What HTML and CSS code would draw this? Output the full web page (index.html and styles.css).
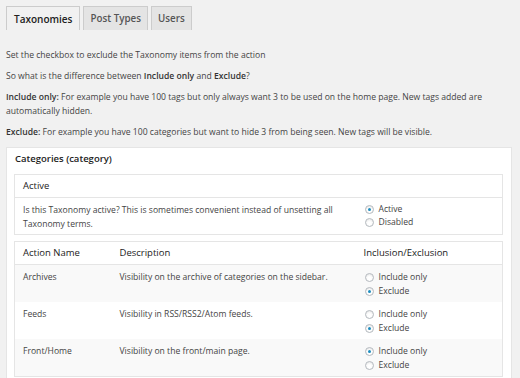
FILE: index.html
```html
<!DOCTYPE html>
<html>
<head>
<meta charset="utf-8">
<link rel="stylesheet" href="styles.css">
</head>
<body>
<nav class="tabs">
  <span class="tab active">Taxonomies</span>
  <span class="tab">Post Types</span>
  <span class="tab">Users</span>
</nav>
<p class="intro first">Set the checkbox to exclude the Taxonomy items from the action</p>
<p class="intro">So what is the difference between <b>Include only</b> and <b>Exclude</b>?</p>
<p class="intro"><b>Include only:</b> For example you have 100 tags but only always want 3 to be used on the home page. New tags added are automatically hidden.</p>
<p class="intro"><b>Exclude:</b> For example you have 100 categories but want to hide 3 from being seen. New tags will be visible.</p>

<section class="panel">
  <h2 class="panel-title">Categories (category)</h2>
  <table class="box">
    <colgroup><col class="c1"><col class="c2"><col></colgroup>
    <thead><tr><th colspan="3">Active</th></tr></thead>
    <tbody>
      <tr>
        <td colspan="2">Is this Taxonomy active? This is sometimes convenient instead of unsetting all Taxonomy terms.</td>
        <td>
          <label class="radio"><span class="dot on"></span>Active</label>
          <label class="radio"><span class="dot"></span>Disabled</label>
        </td>
      </tr>
    </tbody>
  </table>
  <table class="box actions">
    <colgroup><col class="c1"><col class="c2"><col></colgroup>
    <thead><tr><th>Action Name</th><th>Description</th><th>Inclusion/Exclusion</th></tr></thead>
    <tbody>
      <tr class="alt">
        <td>Archives</td>
        <td>Visibility on the archive of categories on the sidebar.</td>
        <td>
          <label class="radio"><span class="dot"></span>Include only</label>
          <label class="radio"><span class="dot on"></span>Exclude</label>
        </td>
      </tr>
      <tr>
        <td>Feeds</td>
        <td>Visibility in RSS/RSS2/Atom feeds.</td>
        <td>
          <label class="radio"><span class="dot"></span>Include only</label>
          <label class="radio"><span class="dot on"></span>Exclude</label>
        </td>
      </tr>
      <tr class="alt">
        <td>Front/Home</td>
        <td>Visibility on the front/main page.</td>
        <td>
          <label class="radio"><span class="dot on"></span>Include only</label>
          <label class="radio"><span class="dot"></span>Exclude</label>
        </td>
      </tr>
    </tbody>
  </table>
</section>
</body>
</html>
```
FILE: styles.css
```css
html, body {
  margin: 0;
  background: #f1f1f1;
}
body {
  padding: 6px 8px 0 6px;
  font-family: "Open Sans", "DejaVu Sans", sans-serif;
  font-size: 8.6px;
  line-height: 14px;
  color: #444;
  overflow: hidden;
}
b { font-weight: 600; color: #333; }

.tabs {
  display: flex;
  gap: 3px;
  height: 24px;
}
.tab {
  display: block;
  padding: 0 6px;
  height: 24px;
  line-height: 24px;
  border: 1px solid #ccc;
  border-bottom: none;
  background: #e4e4e4;
  color: #555;
  font-size: 9.8px;
  font-weight: 600;
  box-sizing: border-box;
}
.tab.active {
  background: #f1f1f1;
  color: #222;
  padding: 0 7px;
  font-size: 10px;
}

.intro {
  margin: 7px 0 0;
}
.intro.first { margin-top: 18px; }

.panel {
  margin-top: 8px;
  background: #fff;
  border: 1px solid #e5e5e5;
  padding: 0 8px 8px 7px;
}
.panel-title {
  margin: 0;
  padding: 4px 0 8px 1px;
  font-size: 9.5px;
  line-height: 14px;
  font-weight: 600;
  color: #222;
}

.box {
  width: 100%;
  border-collapse: collapse;
  border: 1px solid #e5e5e5;
  table-layout: fixed;
  margin-bottom: 6px;
}
.box .c1 { width: 97px; }
.box .c2 { width: 244px; }
.box th {
  text-align: left;
  font-weight: 400;
  color: #222;
  font-size: 9.5px;
  height: 22px;
  padding: 0 8px;
  border-bottom: 1px solid #e5e5e5;
  vertical-align: middle;
}
.box td {
  padding: 5px 8px 0;
  vertical-align: top;
  height: 31px;
}
.box tr.alt td { background: #f9f9f9; }
.actions td { height: 32px; }

.radio {
  display: flex;
  align-items: center;
  gap: 5px;
  height: 13px;
  line-height: 13px;
}
.actions .radio { height: 14px; line-height: 14px; }
.dot {
  width: 9px;
  height: 9px;
  border: 1px solid #b4b9be;
  border-radius: 50%;
  box-sizing: border-box;
  background: #fff;
  box-shadow: inset 0 1px 2px rgba(0,0,0,0.1);
  display: flex;
  align-items: center;
  justify-content: center;
  margin-left: 1px;
}
.dot.on::after {
  content: "";
  width: 3px;
  height: 3px;
  border-radius: 50%;
  background: #1e8cbe;
}
```
